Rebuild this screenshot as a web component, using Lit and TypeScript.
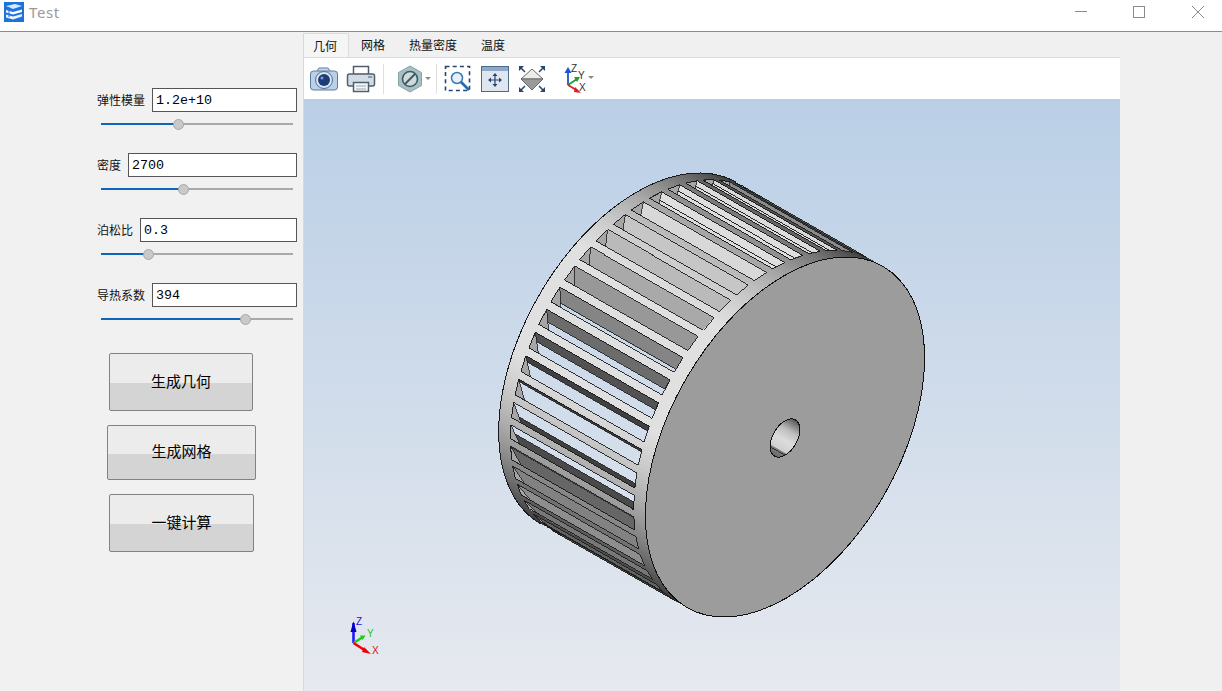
import { LitElement, html, css, svg } from 'lit';
import { customElement, property } from 'lit/decorators.js';

// projected wheel: front circle is an ellipse, axis runs along the minor axis
const CX = 785, CY = 437, RA = 196.7, RB = 114.8, DEPTH = 169;
const UX = 0.497, UY = -0.868, VX = 0.868, VY = 0.497;

const pt = (deg: number, s: number) => {
  const r = (deg * Math.PI) / 180;
  const c = RA * Math.cos(r), n = RB * Math.sin(r) - s * DEPTH;
  return [CX + c * UX + n * VX, CY + c * UY + n * VY];
};
const pts = (list: number[][]) => list.map((p) => `${p[0].toFixed(1)},${p[1].toFixed(1)}`).join(' ');

const shade = (deg: number) => {
  const q = Math.min(1, Math.abs(Math.sin((deg * Math.PI) / 180)) / 0.95);
  const v = Math.round(58 + 166 * Math.pow(q, 1.6));
  return `rgb(${v},${v},${v})`;
};

// blade seen through each slot: top/bot = share of the slot width it covers from either edge
type Slot = { k: number; top: number; bot: number; c: string };
const SLOTS: Slot[] = [
  { k: -12, top: 1, bot: 0, c: '#5c5c5c' },
  { k: -11, top: 1, bot: 0, c: '#8a8a8a' },
  { k: -10, top: 0.7, bot: 0.3, c: '#d8d8d8' },
  { k: -9, top: 0.7, bot: 0.3, c: '#dcdcdc' },
  { k: -8, top: 0.68, bot: 0.32, c: '#dedede' },
  { k: -7, top: 0.72, bot: 0.28, c: '#dedede' },
  { k: -6, top: 1, bot: 0, c: '#d8d8d8' },
  { k: -5, top: 1, bot: 0, c: '#c6c6c6' },
  { k: -4, top: 1, bot: 0, c: '#bababa' },
  { k: -3, top: 1, bot: 0, c: '#a9a9a9' },
  { k: -2, top: 1, bot: 0, c: '#989898' },
  { k: -1, top: 0.82, bot: 0, c: '#858585' },
  { k: 0, top: 0.62, bot: 0, c: '#6c6c6c' },
  { k: 1, top: 0.45, bot: 0, c: '#525252' },
  { k: 2, top: 0.3, bot: 0, c: '#404040' },
  { k: 3, top: 0.12, bot: 0, c: '#3a3a3a' },
  { k: 4, top: 0, bot: 0.3, c: '#404040' },
  { k: 5, top: 0, bot: 0.55, c: '#4a4a4a' },
  { k: 6, top: 0, bot: 0.94, c: '#666666' },
  { k: 7, top: 1, bot: 0, c: '#828282' },
  { k: 8, top: 1, bot: 0, c: '#8e8e8e' },
  { k: 9, top: 1, bot: 0, c: '#777777' },
  { k: 10, top: 1, bot: 0, c: '#636363' },
  { k: 11, top: 1, bot: 0, c: '#505050' },
];

const BACK = 0.92, FRONT = 0.08;

function wheel() {
  const strips = [];
  for (let t = -180; t < 0; t += 1.5) {
    strips.push(svg`<polygon points=${pts([pt(t, 0), pt(t + 1.6, 0), pt(t + 1.6, 1), pt(t, 1)])} fill=${shade(t)} />`);
  }
  const slots = SLOTS.map((sl) => {
    const tU = -92.2 - 7.5 * sl.k;
    const tL = tU - 5;
    const at = (f: number, s: number) => pt(tU + (tL - tU) * f, s);
    const band = (a: number, b: number) => pts([at(a, BACK), at(b, BACK), at(b, FRONT), at(a, FRONT)]);
    return svg`
      <polygon points=${band(0, 1)} fill="url(#sky)" />
      ${sl.top > 0 ? svg`<polygon points=${band(0, sl.top)} fill=${sl.c} />` : ''}
      ${sl.bot > 0 ? svg`<polygon points=${band(1 - sl.bot, 1)} fill=${sl.c} />` : ''}
      ${sl.top > 0 && sl.top < 1 ? svg`<polygon points=${band(0, sl.top)} fill="none" stroke="#1c1c1c" stroke-width="0.8" />` : ''}
      ${sl.bot > 0 && sl.bot < 1 ? svg`<polygon points=${band(1 - sl.bot, 1)} fill="none" stroke="#1c1c1c" stroke-width="0.8" />` : ''}
      <polygon points=${pts([at(0, BACK), at(1, BACK), at(1, BACK - 0.065)])} fill="#a6a6a6" stroke="#1c1c1c" stroke-width="0.8" />
      <polygon points=${band(0, 1)} fill="none" stroke="#1c1c1c" stroke-width="0.9" />
    `;
  });
  const backArc: number[][] = [];
  for (let t = -180; t <= 0; t += 2) backArc.push(pt(t, 1));
  return svg`
    ${strips}
    ${slots}
    <polyline points=${pts(backArc)} fill="none" stroke="#1a1a1a" stroke-width="1" />
    <g transform="translate(${CX} ${CY}) rotate(-60.2)">
      <ellipse rx=${RA} ry=${RB} fill="#9c9c9c" stroke="#111" stroke-width="1" />
    </g>
    <g transform="translate(785 438) rotate(-60.2)">
      <ellipse rx="20.9" ry="12.2" fill="url(#bore)" stroke="#111" stroke-width="1" />
    </g>
    <line x1="770" y1="447" x2="785" y2="455" stroke="#222" stroke-width="0.8" />
  `;
}

function triad() {
  return svg`
    <g shape-rendering="auto">
      <line x1="353.5" y1="643" x2="353.5" y2="623" stroke="#1a1aff" stroke-width="2.6" />
      <polygon points="350.5,632 356.5,632 353.5,621" fill="#0000c8" />
      <line x1="353.5" y1="643" x2="363" y2="637" stroke="#16d016" stroke-width="2.4" />
      <polygon points="360,635.5 365.5,635.5 362.5,640" fill="#16d016" />
      <line x1="353.5" y1="643" x2="366" y2="651" stroke="#f00000" stroke-width="2.6" />
      <polygon points="364,647 371,654 362,652" fill="#f00000" />
      <text x="356" y="625" class="ax" fill="#1414e6">Z</text>
      <text x="367" y="637" class="ax" fill="#16c816">Y</text>
      <text x="372" y="654" class="ax" fill="#e01010">X</text>
    </g>
  `;
}

@customElement('value-slider')
class ValueSlider extends LitElement {
  static styles = css`
    :host { display: block; height: 11px; margin: 7px 4px 0; position: relative; }
    .groove { position: absolute; left: 0; right: 0; top: 4px; height: 2px; background: #a9a9a9; }
    .fill { position: absolute; left: 0; top: 4px; height: 2px; background: #0f66b8; }
    .knob {
      position: absolute; top: 0; width: 9px; height: 9px; margin-left: -5px;
      border-radius: 50%; background: #c9c9c9; border: 1px solid #a8a8a8;
    }
  `;
  @property({ type: Number }) at = 0;
  render() {
    return html`
      <div class="groove"></div>
      <div class="fill" style="width:${this.at}px"></div>
      <div class="knob" style="left:${this.at}px"></div>
    `;
  }
}

const PARAMS = [
  { label: '弹性模量', value: '1.2e+10', at: 77 },
  { label: '密度', value: '2700', at: 82 },
  { label: '泊松比', value: '0.3', at: 47 },
  { label: '导热系数', value: '394', at: 144 },
];

@customElement('app-root')
export class AppRoot extends LitElement {
  static styles = css`
    :host {
      display: flex; flex-direction: column; width: 1222px; height: 691px; overflow: hidden;
      background: #f0f0f0; font-family: "Noto Sans CJK SC", "Noto Sans", sans-serif; color: #111;
    }
    .title {
      height: 31px; flex: none; background: #fff; border-bottom: 1px solid #8c8c8c;
      display: flex; align-items: flex-start; box-sizing: content-box; position: relative;
    }
    .logo { margin: 2px 0 0 4px; display: block; }
    .name { margin: 2px 0 0 5px; font: 15px/20px "Noto Sans", sans-serif; color: #9a9a9a; letter-spacing: 0.6px; }
    .winbtns { margin-left: auto; display: flex; }
    .winbtns svg { display: block; }
    .body { flex: 1; display: flex; min-height: 0; }
    .left {
      width: 303px; flex: none; box-sizing: border-box; padding-top: 56px;
      display: flex; flex-direction: column; background: #f1f1f1;
    }
    .param { margin-left: 97px; width: 200px; height: 65px; }
    .row { display: flex; align-items: center; gap: 7px; height: 24px; }
    .row label { font-size: 12px; line-height: 20px; white-space: nowrap; }
    .field {
      flex: 1; height: 24px; box-sizing: border-box; border: 1px solid #555; background: #fff;
      font: 13.33px/24px "Liberation Mono", monospace; padding-left: 3px; color: #000;
    }
    .btn {
      box-sizing: border-box; border: 1px solid #828282; border-radius: 2px; font-size: 15px;
      display: flex; align-items: center; justify-content: center; color: #000; padding-bottom: 4px;
      background: linear-gradient(#ececec 0 52%, #d4d4d4 52% 100%);
    }
    .b1 { margin: 5px 0 0 109px; width: 144px; height: 58px; }
    .b2 { margin: 14px 0 0 107px; width: 149px; height: 55px; }
    .b3 { margin: 14px 0 0 109px; width: 145px; height: 58px; }
    .main {
      width: 817px; flex: none; margin-top: 1px; display: flex; flex-direction: column;
      border-left: 1px solid #d9d9d9; box-sizing: border-box;
    }
    .tabs { height: 25px; flex: none; display: flex; border-bottom: 1px solid #dcdcdc; box-sizing: border-box; font-size: 12px; }
    .tab { padding: 0 12px; line-height: 24px; }
    .tab.on {
      padding: 0 11px 0 9px; background: #f5f5f5; border-top: 1px solid #dcdcdc;
      border-right: 1px solid #dcdcdc; line-height: 23px;
    }
    .tools {
      height: 41px; flex: none; background: #fff; display: flex; align-items: center;
      padding-left: 5px; box-sizing: border-box;
    }
    .tools svg { display: block; flex: none; }
    .sep { width: 1px; height: 30px; background: #dfdfdf; flex: none; }
    .view { flex: 1; min-height: 0; background: linear-gradient(#bacfe6, #e6e9ef); }
    .view svg { display: block; }
    .ax { font: 10px "Liberation Sans", sans-serif; }
  `;

  renderTools() {
    const navy = '#28456e';
    return html`
      <svg width="30" height="28" viewBox="0 0 30 28">
        <path d="M8 6 L10 3 H19 L21 6" fill="#c9d9ea" stroke="#5d7c9c" />
        <rect x="1.5" y="6" width="27" height="19" rx="3" fill="#b9d0e8" stroke="#5d7c9c" />
        <circle cx="15" cy="15" r="8.5" fill="#d9e5f2" stroke="#54708f" />
        <circle cx="15" cy="15" r="6" fill="#1c3d78" />
        <circle cx="13" cy="13" r="1.5" fill="#7f9ccc" />
      </svg>
      <svg width="30" height="28" viewBox="0 0 30 28" style="margin-left:7px">
        <rect x="7.5" y="1.5" width="15" height="8" fill="#fff" stroke="#4f5f70" stroke-width="1.5" />
        <rect x="1.5" y="9" width="27" height="12" rx="2" fill="#d3dbe4" stroke="#4f5f70" stroke-width="1.5" />
        <rect x="22" y="11" width="4" height="2" fill="#8b99a8" />
        <rect x="7.5" y="17.5" width="15" height="9" fill="#f4f6f8" stroke="#4f5f70" stroke-width="1.5" />
        <path d="M10 21 H20 M10 24 H20" stroke="#98a6b4" />
      </svg>
      <div class="sep" style="margin-left:7px"></div>
      <svg width="26" height="28" viewBox="0 0 26 28" style="margin-left:13px">
        <polygon points="13,1 24.5,7.5 24.5,20.5 13,27 1.5,20.5 1.5,7.5" fill="#a8c0c4" stroke="#86a2a8" />
        <circle cx="13" cy="14" r="7.5" fill="#cfdadc" stroke="#3e5a64" stroke-width="1.6" />
        <line x1="8" y1="19" x2="18" y2="9" stroke="#3e5a64" stroke-width="2" />
      </svg>
      <svg width="8" height="6" viewBox="0 0 8 6" style="margin-left:1px"><polygon points="1,1 7,1 4,4" fill="#8a8a8a" /></svg>
      <div class="sep" style="margin-left:4px"></div>
      <svg width="28" height="28" viewBox="0 0 28 28" style="margin-left:7px">
        <rect x="1.5" y="1.5" width="24" height="24" fill="none" stroke=${navy} stroke-width="1.6" stroke-dasharray="4 3.2" />
        <circle cx="13" cy="13" r="5.5" fill="#e6f0fa" stroke="#3a78b0" stroke-width="1.5" />
        <line x1="17" y1="17" x2="25" y2="25" stroke="#1f6cb0" stroke-width="2.6" />
      </svg>
      <svg width="30" height="28" viewBox="0 0 30 28" style="margin-left:8px">
        <rect x="1.5" y="1.5" width="27" height="25" fill="#dfe6f0" stroke="#4e6a8c" />
        <rect x="2" y="2" width="26" height="4" fill="#8ea8c8" />
        <path d="M15 9 V21 M9 15 H21" stroke=${navy} stroke-width="1.2" />
        <path d="M12.5 11 L15 8 L17.5 11 Z M12.5 19 L15 22 L17.5 19 Z M11 12.5 L8 15 L11 17.5 Z M19 12.5 L22 15 L19 17.5 Z" fill=${navy} />
      </svg>
      <svg width="30" height="30" viewBox="0 0 30 30" style="margin-left:7px">
        <polygon points="15,5 26,15 4,15" fill="#ececec" stroke="#6a6a6a" />
        <polygon points="4,15 26,15 15,26" fill="#9a9a9a" stroke="#6a6a6a" />
        <path d="M3 3 L8 8 M27 3 L22 8 M3 27 L8 22 M27 27 L22 22" stroke=${navy} stroke-width="1.5" />
        <path d="M2 2 H7 L2 7 Z M28 2 H23 L28 7 Z M2 28 H7 L2 23 Z M28 28 H23 L28 23 Z" fill=${navy} />
      </svg>
      <svg width="36" height="30" viewBox="0 0 36 30" style="margin-left:14px">
        <line x1="7" y1="21" x2="7" y2="7" stroke="#1f55c8" stroke-width="1.8" />
        <polygon points="3.5,9 10.5,9 7,3" fill="#1f55c8" />
        <line x1="7" y1="21" x2="16" y2="15" stroke="#1c9c3c" stroke-width="1.8" />
        <polygon points="13,13 19,13 16,18" fill="#1c9c3c" />
        <line x1="7" y1="21" x2="17" y2="27" stroke="#d82020" stroke-width="1.8" />
        <polygon points="14,23 20,29 13,28" fill="#d82020" />
        <text x="10" y="8" class="ax" fill="#333">Z</text>
        <text x="17" y="15" class="ax" fill="#333">Y</text>
        <text x="18" y="27" class="ax" fill="#333">X</text>
        <polygon points="27,12 33,12 30,15" fill="#8a8a8a" />
      </svg>
    `;
  }

  render() {
    return html`
      <div class="title">
        <svg class="logo" width="20" height="20" viewBox="0 0 20 20">
          <rect width="20" height="20" fill="#1b74de" />
          <path d="M2 4 L11 2 L18 4 L9 7 Z" fill="#d7e8fb" />
          <path d="M2 8 L9 10 L18 7.5 V10 L9 12.5 L2 10.5 Z" fill="#fff" />
          <path d="M2 12.5 L9 14.5 L18 12 V14.5 L9 17.5 L2 15.5 Z" fill="#eaf3fd" />
          <path d="M5 5 V15" stroke="#1b74de" stroke-width="1" />
        </svg>
        <span class="name">Test</span>
        <div class="winbtns">
          <svg width="164" height="31" viewBox="0 0 164 31">
            <line x1="17" y1="11.5" x2="29" y2="11.5" stroke="#8a8a8a" />
            <rect x="75.5" y="6.5" width="11" height="11" fill="none" stroke="#8a8a8a" />
            <path d="M134 6 L146 18 M146 6 L134 18" stroke="#8a8a8a" />
          </svg>
        </div>
      </div>
      <div class="body">
        <div class="left">
          ${PARAMS.map((p) => html`
            <div class="param">
              <div class="row"><label>${p.label}</label><div class="field">${p.value}</div></div>
              <value-slider .at=${p.at}></value-slider>
            </div>
          `)}
          <div class="btn b1">生成几何</div>
          <div class="btn b2">生成网格</div>
          <div class="btn b3">一键计算</div>
        </div>
        <div class="main">
          <div class="tabs">
            <div class="tab on">几何</div>
            <div class="tab">网格</div>
            <div class="tab">热量密度</div>
            <div class="tab">温度</div>
          </div>
          <div class="tools">${this.renderTools()}</div>
          <div class="view">
            <svg width="816" height="592" viewBox="304 99 816 592" shape-rendering="crispEdges">
              <defs>
                <linearGradient id="sky" gradientUnits="userSpaceOnUse" x1="0" y1="99" x2="0" y2="691">
                  <stop offset="0" stop-color="#bacfe6" />
                  <stop offset="1" stop-color="#e6e9ef" />
                </linearGradient>
                <linearGradient id="bore" x1="1" y1="0.5" x2="0" y2="0.5">
                  <stop offset="0" stop-color="#555" />
                  <stop offset="0.3" stop-color="#bcbcbc" />
                  <stop offset="0.55" stop-color="#dcdcdc" />
                  <stop offset="0.8" stop-color="#cfcfcf" />
                  <stop offset="0.82" stop-color="#7d7d7d" />
                  <stop offset="1" stop-color="#6a6a6a" />
                </linearGradient>
              </defs>
              ${wheel()}
              ${triad()}
            </svg>
          </div>
        </div>
      </div>
    `;
  }
}
